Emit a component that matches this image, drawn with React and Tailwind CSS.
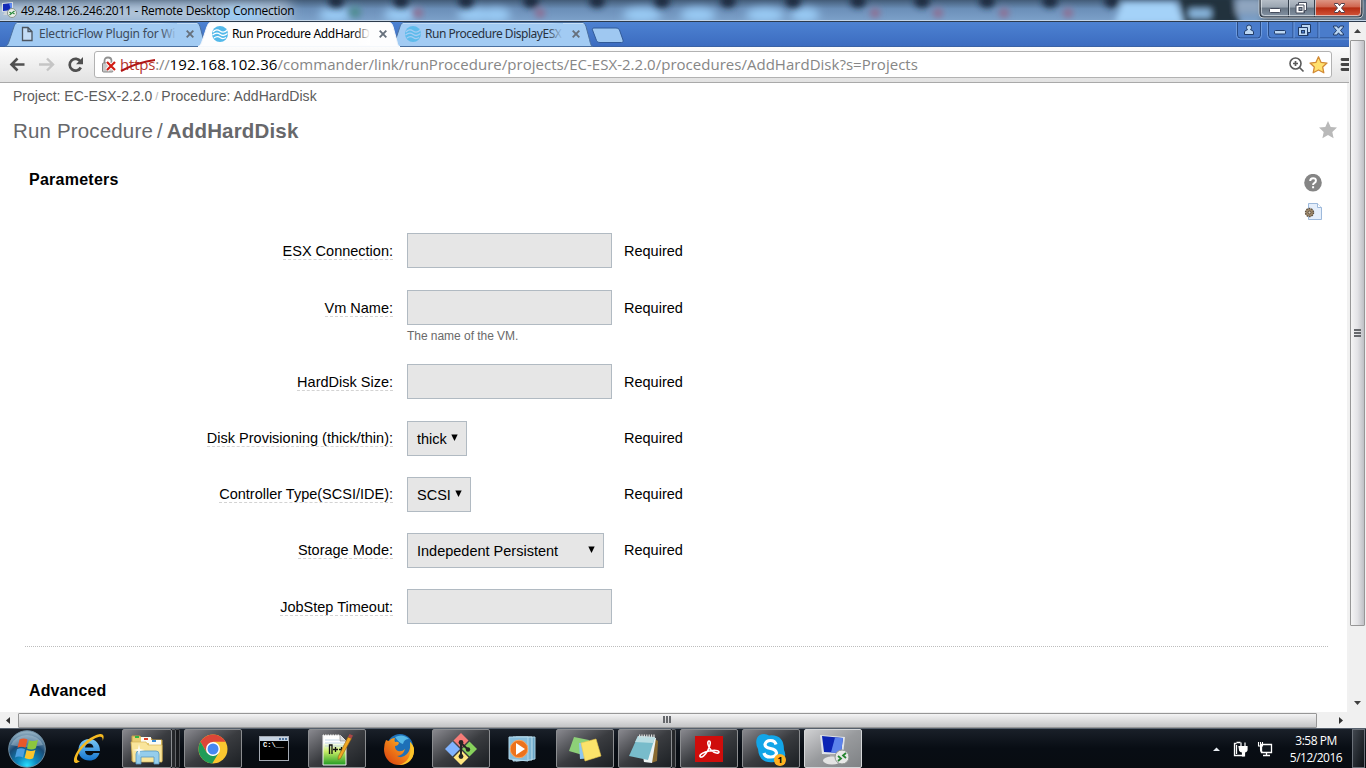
import React from "react";

const darkSpots = [336, 401, 466, 531, 597, 662, 728, 793, 858, 922, 987, 1050, 1112];
const lightSpots = [[335, 20], [400, 20], [475, 22], [496, 18], [642, 24], [698, 22], [765, 24], [805, 18], [240, 30]];
const redSpots = [418, 540, 875, 938, 1004, 1068];

function TitleBackdrop() {
  return (
    <svg className="absolute inset-0" width="1366" height="22" viewBox="0 0 1366 22">
      <defs>
        <linearGradient id="tb" x1="0" y1="0" x2="0" y2="1">
          <stop offset="0" stopColor="#435c78" />
          <stop offset="0.4" stopColor="#6b8fb8" />
          <stop offset="1" stopColor="#7ea3cb" />
        </linearGradient>
        <filter id="b3" x="-50%" y="-100%" width="200%" height="300%"><feGaussianBlur stdDeviation="3.2" /></filter>
        <filter id="b4" x="-50%" y="-100%" width="200%" height="300%"><feGaussianBlur stdDeviation="4" /></filter>
        <filter id="b10" x="-20%" y="-200%" width="140%" height="500%"><feGaussianBlur stdDeviation="7" /></filter>
      </defs>
      <rect width="1366" height="22" fill="url(#tb)" />
      <rect x="-10" y="3" width="300" height="18" fill="#c9d6e2" opacity="0.85" filter="url(#b10)" />
      <g filter="url(#b4)">
        {lightSpots.map(([x, r]) => <ellipse key={x} cx={x} cy="15" rx={r * 0.8} ry="7" fill="#9accf6" />)}
      </g>
      <g filter="url(#b3)">
        {redSpots.map((x) => <circle key={x} cx={x} cy="13" r="5" fill="#8f6e92" />)}
        <circle cx="355" cy="12" r="6" fill="#4f8c92" />
        {darkSpots.map((x) => <ellipse key={x} cx={x} cy="1" rx="8" ry="7" fill="#1c2c3f" />)}
        <path d="M1122 2h54l8 22h-70z" fill="#a4d2f8" />
        <path d="M1178 -6h54l8 32h-56z" fill="#22303d" />
        <rect x="1189" y="9" width="22" height="9" fill="#8ab8e0" />
        <rect x="1236" y="-2" width="26" height="16" fill="#8fa5bf" />
        <rect x="1262" y="0" width="110" height="26" fill="#5f7386" />
      </g>
      <path d="M0 20.5H1366" stroke="#c5d6e8" />
      <path d="M0 21.5H1366" stroke="#2c3a4c" />
    </svg>
  );
}

function XGlyph({ x, y, fill, stroke }) {
  return (
    <path
      transform={`translate(${x} ${y})`}
      d="M0 0h3.4l1.6 2.2L6.6 0H10v1L7 4.5 10 8v1H6.6L5 6.8 3.4 9H0V8l3-3.5L0 1z"
      fill={fill} stroke={stroke} strokeWidth="1"
    />
  );
}

function WindowButtons() {
  return (
    <svg width="108" height="20" viewBox="1258 0 108 20">
      <defs>
        <linearGradient id="wg" x1="0" y1="0" x2="0" y2="1">
          <stop offset="0" stopColor="#b9c1ca" /><stop offset="0.45" stopColor="#9aa5b1" />
          <stop offset="0.5" stopColor="#697684" /><stop offset="1" stopColor="#8594a5" />
        </linearGradient>
        <linearGradient id="wr" x1="0" y1="0" x2="0" y2="1">
          <stop offset="0" stopColor="#dd9583" /><stop offset="0.42" stopColor="#d06650" />
          <stop offset="0.5" stopColor="#b52c12" /><stop offset="1" stopColor="#d4553a" />
        </linearGradient>
      </defs>
      <path d="M1260 -1v14q0 4 4 4h94q4 0 4-4v-14z" fill="url(#wg)" stroke="#e2e8ee" strokeWidth="2.6" />
      <path d="M1260 -1v14q0 4 4 4h94q4 0 4-4v-14z" fill="url(#wg)" stroke="#28303a" strokeWidth="1.2" />
      <path d="M1315 0h46v12q0 4-4 4h-42z" fill="url(#wr)" />
      <path d="M1288.5 0v17M1314.5 0v17" stroke="#35404c" />
      <path d="M1289.5 0v16M1315.5 0v16" stroke="#cdd5dd" opacity=".8" />
      <path d="M1261.5 0v12.5q0 3 3 3h93q3 0 3-3V0" fill="none" stroke="#dfe5ea" opacity=".7" />
      <rect x="1269.5" y="8.500" width="11" height="4" rx="1" fill="#fff" stroke="#454c5c" />
      <path d="M1298.500 2.500h8v8h-2v2.500h-8.500v-8h2.500z" fill="#fff" stroke="#454c5c" />
      <path d="M1296 5h8v8" fill="none" stroke="#454c5c" />
      <rect x="1299" y="7.500" width="3" height="3" fill="#8995a3" stroke="#454c5c" />
      <XGlyph x={1334.5} y={3.5} fill="#fff" stroke="#50404c" />
    </svg>
  );
}

function RdpIcon() {
  return (
    <svg width="16" height="18" viewBox="0 0 16 18" className="shrink-0">
      <path d="M1 3l11-1v9l-11 1z" fill="#d8dde2" />
      <path d="M2 4l9-1v7l-9 1z" fill="#1129b8" />
      <path d="M8 3.300l3-.3v7l-1 .1z" fill="#5f8af0" />
      <path d="M4 12h5l1 3H2z" fill="#cfd4d8" />
      <circle cx="11" cy="13" r="4.500" fill="#e9eee9" stroke="#8b9690" />
      <path d="M8.500 12l2 1.500-2 1.500M13.500 11l-2 1.500 2 1.500" fill="none" stroke="#28883a" strokeWidth="1.200" />
    </svg>
  );
}

function TitleBar() {
  return (
    <header className="relative h-[22px] shrink-0 overflow-hidden">
      <TitleBackdrop />
      <div className="relative flex h-[22px] items-start pl-px">
        <RdpIcon />
        <span className="ml-1 mt-[2px] whitespace-nowrap font-['Open_Sans',sans-serif] text-[12px] leading-[18px] tracking-[-0.26px] text-black">
          49.248.126.246:2011 - Remote Desktop Connection
        </span>
        <div className="ml-auto"><WindowButtons /></div>
      </div>
    </header>
  );
}

function FlowLogo({ faded }) {
  return (
    <svg width="16" height="16" viewBox="0 0 16 16" className="shrink-0" opacity={faded ? 0.85 : 1}>
      <circle cx="8" cy="8" r="8" fill="#53b9ea" />
      <path d="M1 6c2-2.500 5-2.500 7-1s5 1.200 7-.7M.5 9c2.500-2 5.500-2.300 7.500-.7s5 1.300 7.500-.7M2 12c2-1.700 4.500-1.700 6.500-.3s4 .8 5.500-.2" fill="none" stroke={faded ? "#a6cdf4" : "#fff"} strokeWidth="1.300" />
    </svg>
  );
}

function CloseX() {
  return (
    <svg width="8" height="8" viewBox="0 0 8 8" className="shrink-0">
      <path d="M.7.7l6.600 6.600M7.300.7L.7 7.300" stroke="#66707c" strokeWidth="1.900" />
    </svg>
  );
}

function Tab({ active, icon, label, className, textClass, fadeClass }) {
  return (
    <div className={"relative -mb-px h-[25px] w-[202px] shrink-0 " + (active ? "z-10 " : "") + className}>
      <svg className="absolute inset-0" width="202" height="25" viewBox="0 0 202 25">
        <path
          d="M0 24.500C2.500 24 3.500 21 4.500 18l4-12C10 2 10.500.500 13 .5h178c2.500 0 3 1.500 4 4l3.500 13c1 4 1.500 7 3.500 7z"
          fill={active ? "#fdfdfe" : "#a2cbf3"} stroke={active ? "#f4f7fb" : "#496f9f"} strokeWidth="1"
        />
        {!active && <path d="M12 1.500h180" stroke="#c4def7" />}
      </svg>
      <div className="relative flex h-6 items-center pl-[14px]">
        {icon}
        <div className="relative ml-1 w-[138px]">
          <span className={"block whitespace-nowrap font-['Noto_Sans',sans-serif] text-[12px] leading-[22px] " + textClass}>{label}</span>
          <span className={"absolute right-0 top-0 h-full w-4 bg-linear-to-r from-transparent " + fadeClass} />
        </div>
        <span className="ml-[9px]"><CloseX /></span>
      </div>
    </div>
  );
}

function BrowserButtons() {
  return (
    <svg width="114" height="18" viewBox="1235 22 114 18">
      <g fill="#4a7ccb" stroke="#274b86">
        <path d="M1237.500 21v14q0 3 3 3h17q3 0 3-3V21zM1268.500 21v14q0 3 3 3h79V21z" />
      </g>
      <path d="M1236.500 22v13.500q0 3.500 3.500 3.500h18q3.500 0 3.500-3.500V22M1267.500 22v13.500q0 3.500 3.500 3.500h79" fill="none" stroke="#6f9bdd" />
      <path d="M1293 22v16M1318 22v16" stroke="#274b86" />
      <path d="M1294 22v16M1319 22v16" stroke="#6f9bdd" />
      <g fill="#bdd8f3" stroke="#203b67">
        <path d="M1244.500 34.500v-2.500q0-1.500 3-2.300-1-1-1-2.200 0-2.500 2.500-2.500t2.500 2.500q0 1.200-1 2.200 3 .8 3 2.300v2.500z" />
        <rect x="1274.500" y="30.500" width="11" height="3.500" rx="1" />
        <path d="M1301.500 24.500h9v8h-2.500v3h-9.500v-8h3z" />
        <path d="M1298.500 27.500h9v8" fill="none" />
        <rect x="1301.500" y="30.500" width="3" height="2.500" fill="#4a7ccb" />
      </g>
      <XGlyph x={1333.5} y={26} fill="#bdd8f3" stroke="#203b67" />
    </svg>
  );
}

function TabStrip() {
  return (
    <div className="flex h-[25px] shrink-0 items-end border-b border-[#3a62a4] bg-linear-to-b from-[#4d82d2] to-[#3c6cc0]">
      <Tab className="ml-[5px]" textClass="text-[#3c4a5c] tracking-[-0.22px]" fadeClass="to-[#a2cbf3]" label="ElectricFlow Plugin for Wi"
        icon={<svg width="16" height="16" viewBox="0 0 16 16" className="shrink-0"><path d="M3.500 1.500H9l4 4v9H3.500zM9 1.500v4h4" fill="#c4dcf5" stroke="#4c5560" strokeWidth="1.300" /></svg>} />
      <Tab active className="-ml-[9px]" textClass="text-black tracking-[-0.36px]" fadeClass="to-white" label="Run Procedure AddHardD" icon={<FlowLogo />} />
      <Tab className="-ml-[9px]" textClass="text-[#28323e] tracking-[-0.48px]" fadeClass="to-[#a2cbf3]" label="Run Procedure DisplayESX" icon={<FlowLogo faded />} />
      <svg width="34" height="17" viewBox="0 0 34 17" className="-ml-[2px] mb-[2px] shrink-0">
        <path d="M3 1h22c2 0 3 1 3.500 2l3.500 10c.5 1.500 0 2.500-1.500 2.500H9c-2 0-3-1-3.500-2L1.500 3C1 2 1.500 1 3 1z" fill="#9fc8f1" stroke="#315a98" />
      </svg>
      <div className="ml-auto self-start"><BrowserButtons /></div>
    </div>
  );
}

function AddressBar() {
  return (
    <div className="flex h-[36px] shrink-0 items-start overflow-hidden border-b border-[#a9a9a9] bg-linear-to-b from-[#fcfcfc] to-[#e2e2e2] pt-[4px]">
      <svg width="94" height="27" viewBox="0 51 94 27" className="shrink-0">
        <path d="M24.500 64.500H12M17.500 58.500l-6 6 6 6" fill="none" stroke="#505050" strokeWidth="2.600" />
        <path d="M39 64.500h12.500M47 58.500l6 6-6 6" fill="none" stroke="#c5c5c5" strokeWidth="2.400" />
        <path d="M80.500 61.500A5.900 5.900 0 1 0 80.800 67.500" fill="none" stroke="#505050" strokeWidth="2.700" />
        <path d="M83 57v7.200h-7z" fill="#505050" />
      </svg>
      <div className="flex h-[27px] w-[1238px] shrink-0 items-center rounded-[3px] border border-[#b2b2b2] bg-white">
        <svg width="16" height="18" viewBox="0 0 16 18" className="ml-[6px] shrink-0">
          <path d="M3.500 8V5q0-3.500 3.500-3.500T10.500 5v3" fill="none" stroke="#909090" strokeWidth="1.800" />
          <rect x="1.500" y="7" width="10.500" height="9" rx="1" fill="#c9c9c9" stroke="#858585" />
          <path d="M6 6l8 8M14 6l-8 8" stroke="#fff" strokeWidth="4" />
          <path d="M6 6l8 8M14 6l-8 8" stroke="#d11b12" strokeWidth="2.200" />
        </svg>
        <div className="relative -mt-[2px] ml-[3px] flex whitespace-nowrap font-['Open_Sans',sans-serif] text-[15px] leading-[24px] text-[#868686]">
          <span className="tracking-[-0.2px] text-[#b3382f]">https</span>
          <span className="tracking-[-0.2px]">://</span>
          <span className="tracking-[0.13px] text-black">192.168.102.36</span>
          <span className="tracking-[0.02px]">/commander/link/runProcedure/projects/EC-ESX-2.2.0/procedures/AddHardDisk?s=Projects</span>
          <svg className="absolute left-0 top-[5px]" width="36" height="16" viewBox="0 0 36 16"><path d="M1 14Q18 5 35 3" fill="none" stroke="#b01515" strokeWidth="2" /></svg>
        </div>
        <svg width="40" height="20" viewBox="0 0 40 20" className="ml-auto mr-[3px] shrink-0">
          <circle cx="7.500" cy="8.500" r="5.500" fill="none" stroke="#5a5a5a" strokeWidth="1.600" />
          <path d="M5 8.500h5M7.500 6v5M11.500 12.500l4 4" stroke="#5a5a5a" strokeWidth="1.700" />
          <path d="M30.500 1.800l2.600 5.600 5.900.7-4.300 4 1.100 5.700-5.300-2.800-5.300 2.800 1.100-5.700-4.300-4 5.900-.7z" fill="#ffe16e" stroke="#d28a35" strokeWidth="1.300" strokeLinejoin="round" />
        </svg>
      </div>
      <svg width="17" height="27" viewBox="0 0 17 27" className="shrink-0">
        <path d="M10 8.500h10M10 13.500h10M10 18.500h10" stroke="#454545" strokeWidth="2.800" strokeLinecap="round" />
      </svg>
    </div>
  );
}

const rows = [
  { label: "ESX Connection:", required: true, height: "h-[57px]" },
  { label: "Vm Name:", required: true, help: "The name of the VM.", height: "h-[74px]" },
  { label: "HardDisk Size:", required: true, height: "h-[57px]" },
  { label: "Disk Provisioning (thick/thin):", required: true, select: "thick", width: "w-[60px]", height: "h-[56px]" },
  { label: "Controller Type(SCSI/IDE):", required: true, select: "SCSI", width: "w-[64px]", height: "h-[56px]" },
  { label: "Storage Mode:", required: true, select: "Indepedent Persistent", width: "w-[197px]", height: "h-[56px]" },
  { label: "JobStep Timeout:", height: "h-[57px]" },
];

function Field({ row }) {
  if (!row.select) {
    return <input aria-label={row.label} className="block h-[35px] w-[205px] border border-[#b1bac2] bg-[#e6e6e6] outline-none" />;
  }
  return (
    <div className={"flex h-[35px] items-center justify-between border border-[#b1bac2] bg-[#e6e6e6] pl-[9px] pr-[8px] " + row.width}>
      <span className="mt-px whitespace-nowrap">{row.select}</span>
      <svg width="7" height="7" viewBox="0 0 7 7" className="-mt-[2px] shrink-0"><path d="M.3.5h6.400L3.500 7z" fill="#000" /></svg>
    </div>
  );
}

function FormRow({ row }) {
  const offset = row.select ? "mt-[9px] " : "mt-[10px] ";
  return (
    <div className={"grid grid-cols-[393px_205px_1fr] items-start gap-x-[14px] text-[14.5px] leading-[16px] text-black " + row.height}>
      <div className={offset + "flex justify-end"}>
        <span className="h-[17px] whitespace-nowrap border-b border-dashed border-[#d3d3d3]">{row.label}</span>
      </div>
      <div>
        <Field row={row} />
        {row.help && <div className="mt-[4px] text-[12px] leading-[14px] tracking-[-0.04px] text-[#6a6a6a]">{row.help}</div>}
      </div>
      <div className={offset + "-ml-[2px]"}>{row.required ? "Required" : ""}</div>
    </div>
  );
}

function Page() {
  return (
    <main className="flex min-h-0 grow flex-col overflow-hidden border-r-2 border-[#f1f1f1] bg-white">
      <div className="flex h-[27px] shrink-0 items-start pl-[13px] pt-[5px] text-[14px] leading-[16px] text-[#5c5c5c]">
        <span>Project: EC-ESX-2.2.0</span>
        <span className="ml-[3px] mr-[3px] text-[11px] text-[#b5b5b5]">/</span>
        <span className="tracking-[0.06px]">Procedure: AddHardDisk</span>
      </div>
      <div className="flex h-[57px] shrink-0 items-start justify-between pl-[13px] pr-[10px] pt-[9px] text-[20.5px] leading-[24px] text-[#67686b]">
        <h1 className="whitespace-nowrap tracking-[0.16px]">Run Procedure<span className="ml-[4px] mr-[4px]">/</span><b className="text-[#67686b]">AddHardDisk</b></h1>
        <svg width="18" height="18" viewBox="0 0 18 18" className="mt-[2px]"><path d="M9 0l2.700 5.900 6.300.7-4.700 4.300 1.300 6.300L9 14.100l-5.600 3.100 1.300-6.300L0 6.600l6.300-.7z" fill="#b9b9b9" /></svg>
      </div>
      <div className="flex h-[66px] shrink-0 items-start justify-between pl-[29px] pr-[24px]">
        <h2 className="mt-[3px] text-[16px] font-bold leading-[20px] tracking-[0.25px] text-black">Parameters</h2>
        <div className="flex flex-col items-end gap-[11px] pt-[7px]">
          <svg width="18" height="18" viewBox="0 0 18 18" className="mr-px">
            <circle cx="9" cy="8.700" r="8.800" fill="#858585" />
            <path d="M6.200 7q0-2.800 2.900-2.800T11.900 6.700q0 1.300-1.400 2.100Q9.100 9.500 9.100 11M9.100 12.300v2" fill="none" stroke="#fff" strokeWidth="2" />
          </svg>
          <svg width="18" height="18" viewBox="0 1 18 18" className="mr-px">
            <path d="M4.500 1.500h9l4 4v12h-13z" fill="#e4eefb" stroke="#9db9db" />
            <path d="M13.500 1.500v4h4" fill="#fff" stroke="#9db9db" />
            <circle cx="5.500" cy="10.500" r="4" fill="#a08a6c" stroke="#5e503f" strokeWidth="1.400" strokeDasharray="1.600 .9" />
            <circle cx="5.500" cy="10.500" r="1.500" fill="#d8ccba" stroke="#5e503f" />
          </svg>
        </div>
      </div>
      <section className="h-[413px] shrink-0">{rows.map((r) => <FormRow key={r.label} row={r} />)}</section>
      <div className="ml-[25px] mr-[19px] shrink-0 border-t border-dotted border-[#bdbdbd]" />
      <h2 className="mt-[34px] pl-[29px] text-[16px] font-bold leading-[20px] tracking-[0.1px] text-black">Advanced</h2>
    </main>
  );
}

function VerticalScroll() {
  return (
    <div className="flex w-[17px] shrink-0 flex-col items-center bg-[#f0f0f0]">
      <div className="flex h-[18px] items-center"><svg width="7" height="4" viewBox="0 0 7 4"><path d="M0 4L3.500 0 7 4z" fill="#404040" /></svg></div>
      <div className="flex h-[586px] w-[15px] flex-col items-center justify-center gap-px rounded-[1px] border border-[#979797] bg-linear-to-r from-[#f5f5f5] via-[#e3e3e6] to-[#bfc0c5] pr-px">
        <i className="block h-[2px] w-[7px] bg-[#66686c]" />
        <i className="block h-[2px] w-[7px] bg-[#66686c]" />
        <i className="block h-[2px] w-[7px] bg-[#66686c]" />
      </div>
      <div className="mt-auto flex h-[19px] items-center"><svg width="7" height="4" viewBox="0 0 7 4"><path d="M0 0h7L3.500 4z" fill="#404040" /></svg></div>
    </div>
  );
}

function HorizontalScroll() {
  return (
    <div className="flex h-[16px] shrink-0 items-center bg-[#f0f0f0]">
      <div className="flex w-[18px] justify-center pr-[2px]"><svg width="4" height="7" viewBox="0 0 4 7"><path d="M4 0v7L0 3.500z" fill="#303030" /></svg></div>
      <div className="flex h-[15px] w-[1299px] items-center justify-center gap-px rounded-[1px] border border-[#979797] bg-linear-to-b from-[#f4f4f4] via-[#dcdcdd] to-[#c3c4c6] pb-[2px] pr-[2px]">
        <i className="block h-[7px] w-[2px] bg-[#66686c]" />
        <i className="block h-[7px] w-[2px] bg-[#66686c]" />
        <i className="block h-[7px] w-[2px] bg-[#66686c]" />
      </div>
      <div className="ml-[22px]"><svg width="4" height="7" viewBox="0 0 4 7"><path d="M0 0v7l4-3.500z" fill="#303030" /></svg></div>
    </div>
  );
}

function TaskButton({ children, className, active, stacked }) {
  return (
    <div className={"flex h-[39px] shrink-0 " + className}>
      <div className={"flex grow items-center justify-center rounded-[2px] border " + (active
        ? "border-[#d5d7d9] bg-linear-to-br from-[#d0d1d3] via-[#989a9d] to-[#7f8285]"
        : "border-[#8b8d90] bg-linear-to-br from-[#89898f] via-[#3a3c40] to-[#1c2024]")}>
        {children}
      </div>
      {stacked && <div className="w-[4px] shrink-0 rounded-r-[2px] border-y border-r border-[#65676a] bg-[#26282b]" />}
      {stacked === 2 && <div className="w-[4px] shrink-0 rounded-r-[2px] border-y border-r border-[#4b4d50] bg-[#17191c]" />}
    </div>
  );
}

function StartOrb() {
  return (
    <svg width="40" height="40" viewBox="0 0 40 40" className="ml-[7px] shrink-0">
      <defs>
        <radialGradient id="orb" cx=".5" cy=".95" r=".9">
          <stop offset="0" stopColor="#28e0ff" /><stop offset=".3" stopColor="#0f87bd" />
          <stop offset=".65" stopColor="#194a75" /><stop offset="1" stopColor="#8fadc0" />
        </radialGradient>
      </defs>
      <circle cx="20" cy="20" r="18.300" fill="url(#orb)" stroke="#6f8ea3" />
      <path d="M4 16a17 15 0 0 1 32 0Q20 20 4 16z" fill="#d2e2ec" opacity=".35" />
      <path d="M12.500 10.500q4-2 8 0l-2 8.300q-4-2-8 0z" fill="#e9582a" />
      <path d="M22 11.200q4.500 2 9-.4l-2.200 8.400q-4 2.300-8.800.2z" fill="#8cc63e" />
      <path d="M10 20.300q4-2 8 0l-2 8.200q-4-2-8 0z" fill="#4c9fe0" />
      <path d="M19.600 21q4.400 2 8.800 0l-2.200 8.300q-4 2-8.600-.2z" fill="#fcc52c" />
    </svg>
  );
}

function IEIcon() {
  return (
    <svg width="34" height="34" viewBox="0 0 34 34" className="shrink-0">
      <defs><linearGradient id="ie" x1="0" y1="0" x2="0" y2="1"><stop offset="0" stopColor="#7cc9f5" /><stop offset="1" stopColor="#1474cf" /></linearGradient></defs>
      <path fillRule="evenodd" d="M17 7c6.500 0 11 4.500 11 12H13c.3 3 2 4.300 4.500 4.300 2 0 3.200-.8 4-2.300h6c-1.400 5-5.200 7.500-10 7.500C10.500 28.500 6.500 24 6.500 18S10.500 7 17 7zm-4 8.500h8.500c-.4-2.700-1.900-4-4.200-4s-3.900 1.400-4.300 4z" fill="url(#ie)" />
      <path d="M8 29C2 34 0 29 4 21.500 9 12 20 3 28 2c4-.3 4.500 3 2.500 7 .6-3-.5-5-4-4C19 7 9 16 6 23c-2 4-1 6.500 2 6z" fill="#f5b921" />
    </svg>
  );
}

function ExplorerIcon() {
  return (
    <svg width="34" height="34" viewBox="0 0 34 34">
      <path d="M2 4h8l2 2h9l1 2h10v21H2z" fill="#e9cd72" stroke="#c4a147" />
      <path d="M11 5h10v6H11zM19 8h12v5H19z" fill="#fbfbf2" />
      <rect x="5" y="4" width="4" height="2" fill="#33b544" /><rect x="14" y="6" width="4" height="2" fill="#dd3f28" /><rect x="22" y="8" width="4" height="2" fill="#3a8dd8" />
      <path d="M1 10h15l2 3h14v17H3z" fill="#f9e59b" stroke="#d5b659" strokeWidth=".7" />
      <path d="M6 32V22q0-3 3-3h17q3 0 3 3v10h-5v-7H11v7z" fill="#95cdec" stroke="#5898c0" strokeWidth=".8" />
      <path d="M9 12l1 5 5 1-5 1-1 5-1-5-5-1 5-1z" fill="#fff" opacity=".85" />
    </svg>
  );
}

function ChromeIcon() {
  return (
    <svg width="30" height="30" viewBox="0 0 30 30">
      <circle cx="15" cy="15" r="14.500" fill="#fbc72f" />
      <path d="M2.500 7.700A14.500 14.500 0 0 1 27.600 7.800H15L8.700 18.600z" fill="#de4637" />
      <path d="M2.500 7.700L8.800 18.700 15 22l-1 7.500A14.500 14.500 0 0 1 2.500 7.700z" fill="#209c58" />
      <path d="M8.700 18.600L15 22l5.500-2.700-6.300 10.200z" fill="#209c58" />
      <circle cx="15" cy="15" r="7" fill="#fff" /><circle cx="15" cy="15" r="5.500" fill="#4688f1" />
    </svg>
  );
}

function CmdIcon() {
  return (
    <div className="flex h-[25px] w-[30px] shrink-0 flex-col border border-[#a4aab3] bg-black">
      <div className="flex h-[4px] shrink-0 items-center justify-end gap-px bg-[#c6d3e2] pr-px"><i className="size-[2px] bg-[#51749d]" /><i className="size-[2px] bg-[#51749d]" /><i className="size-[2px] bg-[#51749d]" /></div>
      <span className="whitespace-nowrap pl-[3px] font-['Liberation_Mono',monospace] text-[7px] font-bold leading-[9px] text-white">C:\__</span>
    </div>
  );
}

function NotepadPlusIcon() {
  return (
    <svg width="34" height="36" viewBox="0 0 34 36">
      <defs><linearGradient id="npp" x1="0" y1="0" x2="0" y2="1"><stop offset="0.25" stopColor="#fff" /><stop offset=".55" stopColor="#c7ed66" /><stop offset="1" stopColor="#1f9a22" /></linearGradient></defs>
      <path d="M3 4h17l6 6v24H3z" fill="url(#npp)" stroke="#f0f0f0" />
      <path d="M20 4v6h6" fill="#d8d8d8" stroke="#888" strokeWidth=".7" />
      <path d="M5 9h14M5 12h19M5 15h19" stroke="#b4cbe0" strokeWidth=".8" />
      <path d="M4 3.500h16" stroke="#666" strokeWidth="1.500" strokeDasharray="1 1.500" />
      <path d="M9.500 23v-9h2.500v9M13 18.500h5M15.500 16v5M19 18.500h5M21.500 16v5" fill="none" stroke="#111" strokeWidth="1.300" />
      <path d="M28 6l3.500 1.500-11 20-2.500 1 .3-3z" fill="#f0a824" stroke="#8a5b16" strokeWidth=".6" /><path d="M28 6l1.500-3 3.500 1.500-1.500 3z" fill="#a94747" />
    </svg>
  );
}

function FirefoxIcon() {
  return (
    <svg width="32" height="32" viewBox="0 0 32 32" className="shrink-0">
      <defs><linearGradient id="ff" x1="0" y1="1" x2="1" y2="0"><stop offset="0" stopColor="#d7390e" /><stop offset=".5" stopColor="#f08019" /><stop offset="1" stopColor="#fdd733" /></linearGradient></defs>
      <circle cx="17" cy="14" r="13" fill="#1e70b7" />
      <path d="M12 4q8-4 14 2-5 0-6 5-4-1-8-7z" fill="#56b8e6" />
      <path d="M3 7q2 1 3 1 2-3 6-3-1 2 0 4 3-1 4 1-1 3-4 3 0 4 3 5 4 1 7-2-2 7-8 7 5 3 10-2 4-4 3-12 4 4 4 8c0 9-6 15-15 15S1 25 1 16Q1 11 3 7z" fill="url(#ff)" />
      <path d="M27 9q4 4 4 8c0 9-6 15-15 15 9-3 13-9 11-23z" fill="#fbc42a" />
    </svg>
  );
}

function GitIcon() {
  return (
    <svg width="34" height="34" viewBox="0 0 34 34">
      <path d="M17 1l7.500 7.500L17 16 9.500 8.500z" fill="#f67c78" /><path d="M8.500 9.500L16 17l-7.500 7.500L1 17z" fill="#80b3ff" />
      <path d="M25.500 9.500L33 17l-7.500 7.500L18 17z" fill="#87d15c" /><path d="M17 18l7.500 7.500L17 33l-7.500-7.500z" fill="#ffe680" />
      <path d="M17 11v14M17 11l7 6.500" stroke="#252525" strokeWidth="2" />
      <circle cx="17" cy="10.500" r="2.400" fill="#252525" /><circle cx="24" cy="17.500" r="2.200" fill="#252525" /><circle cx="17" cy="24.500" r="2.400" fill="#252525" />
    </svg>
  );
}

function MediaIcon() {
  return (
    <svg width="29" height="28" viewBox="0 0 29 28" className="shrink-0">
      <path d="M8 2h19v22l-19 2z" fill="#6aa6c7" stroke="#a9d0e3" /><path d="M5 2h19v23l-19 1z" fill="#7db5d3" stroke="#c0e0ee" />
      <path d="M1 2h19v24l-19-2z" fill="#87bddb" stroke="#b3d9ec" />
      <circle cx="11" cy="14" r="8.800" fill="#ed721c" stroke="#f8a661" /><path d="M8 8l9 6-9 6z" fill="#fff" />
    </svg>
  );
}

function StickyIcon() {
  return (
    <svg width="34" height="30" viewBox="0 0 34 30">
      <path d="M6 3l15 3-3 16L1 17z" fill="#8dd078" /><path d="M11 9l15-1 1 16-15 1z" fill="#8cc6f0" />
      <path d="M13 9l15-4 5 17-16 5z" fill="#fbe36b" stroke="#ecc94c" strokeWidth=".6" />
    </svg>
  );
}

function NotebookIcon() {
  return (
    <svg width="34" height="32" viewBox="0 0 34 32">
      <path d="M24 4l6 4-1 20-6 2z" fill="#8a6a30" /><path d="M11 3l17 2-4 25-8-1z" fill="#ecf2f2" />
      <path d="M10 3l17 1-7 23-19-4z" fill="#78bccb" /><path d="M10 3l17 1-2 6L7 9z" fill="#b9dde3" />
      <path d="M11 3h16" stroke="#ddd" strokeWidth="3" strokeDasharray="1.200 1.200" />
    </svg>
  );
}

function AcrobatIcon() {
  return (
    <svg width="28" height="26" viewBox="0 0 28 26">
      <rect width="28" height="26" fill="#cf0d0b" />
      <path d="M5 20.500c-1-2 4-4.500 9-5.500s10-.8 10 1-4.500 1.500-8-2-4-9-2-9 1.500 4-1 9-6.500 8.500-8 6.500z" fill="none" stroke="#fff" strokeWidth="1.600" />
    </svg>
  );
}

function SkypeIcon() {
  return (
    <div className="relative">
      <svg width="30" height="32" viewBox="0 0 30 32">
        <path d="M8 1q3 0 5 1.500Q28 1 28 17q3 6-1 10-3 4-9 2Q3 31 2 16-1 10 1 5q2-4 7-4z" fill="#12a5e8" />
        <path d="M20 11.500q-1-4-5.500-4T9 11.500q0 3 5.500 4t6 4.500q-.5 4-6 4t-6.500-4" fill="none" stroke="#fff" strokeWidth="3.200" />
      </svg>
      <span className="absolute -bottom-px right-0 flex size-[12px] items-center justify-center rounded-full bg-[#ffb01f] font-['Open_Sans',sans-serif] text-[9px] font-bold leading-none text-black">1</span>
    </div>
  );
}

function RemoteIcon() {
  return (
    <svg width="34" height="34" viewBox="0 0 34 34">
      <path d="M4 3l25 2-2 18-21-1z" fill="#dfe3e8" /><path d="M6 4l21 2-2 15-17-1z" fill="#0c24b4" /><path d="M19 5.500l8 .5-2 15-10-.5z" fill="#5c83ec" />
      <path d="M14 22h6v4h-6z" fill="#aaa" /><ellipse cx="16" cy="28.500" rx="9" ry="4" fill="#e3e3e3" />
      <circle cx="26" cy="25" r="7" fill="#e8e8e8" stroke="#8e9490" /><path d="M22 24l3 2.500-3 2.500M30 21l-3 2.500 3 2.500" fill="none" stroke="#25852f" strokeWidth="1.800" />
    </svg>
  );
}

function Taskbar() {
  return (
    <footer className="flex h-[40px] shrink-0 items-center overflow-hidden border-t border-[#56606d] bg-linear-to-b from-[#1a2029] via-[#080d14] to-[#080c11]">
      <StartOrb />
      <span className="ml-[25px]"><IEIcon /></span>
      <TaskButton className="ml-[16px] w-[58px]" stacked={2}><ExplorerIcon /></TaskButton>
      <TaskButton className="ml-[4px] w-[58px]"><ChromeIcon /></TaskButton>
      <span className="ml-[17px]"><CmdIcon /></span>
      <TaskButton className="ml-[19px] w-[58px]"><NotepadPlusIcon /></TaskButton>
      <span className="ml-[17px]"><FirefoxIcon /></span>
      <TaskButton className="ml-[17px] w-[58px]"><GitIcon /></TaskButton>
      <span className="ml-[18px]"><MediaIcon /></span>
      <TaskButton className="ml-[19px] w-[58px]"><StickyIcon /></TaskButton>
      <TaskButton className="ml-[4px] w-[58px]" stacked={1}><NotebookIcon /></TaskButton>
      <TaskButton className="ml-[4px] w-[58px]"><AcrobatIcon /></TaskButton>
      <TaskButton className="ml-[4px] w-[58px]"><SkypeIcon /></TaskButton>
      <TaskButton className="ml-[4px] w-[58px]" active><RemoteIcon /></TaskButton>
      <svg width="62" height="20" viewBox="1212 739 62 20" className="ml-auto shrink-0">
        <path d="M1213 751l3.500-3.500 3.500 3.500z" fill="#e8edf2" />
        <path d="M1236.500 743.500h-2v12h9v-3M1236.500 742.500h4M1236.500 745v9" fill="none" stroke="#fff" strokeWidth="1.300" />
        <path d="M1239 746.500h8v3q0 2-2.500 2.500v4h-2v-4q-3-.5-3-2.500zM1241 742.500v4M1245 742.500v4" fill="#fff" stroke="#fff" strokeWidth="1.200" />
        <path d="M1261.500 744.500h10v8h-10zM1263 755.500h7M1266.500 753v3" fill="#10161d" stroke="#fff" strokeWidth="1.300" />
        <path d="M1258.500 742v4h4v-4M1260.500 742v8q0 2 2 2" fill="none" stroke="#fff" strokeWidth="1.100" />
      </svg>
      <div className="ml-[14px] w-[56px] text-center font-['Open_Sans',sans-serif] text-[12px] leading-[17px] tracking-[-0.5px] text-white">
        <div>3:58 PM</div>
        <div>5/12/2016</div>
      </div>
      <div className="ml-[8px] mr-px h-[39px] w-[13px] border border-[#6a7078] bg-linear-to-br from-[#41474f] to-[#0e1216]" />
    </footer>
  );
}

export default function App() {
  return (
    <div className="flex h-[768px] w-[1366px] flex-col overflow-hidden bg-white font-['Liberation_Sans',Arial,sans-serif]">
      <TitleBar />
      <div className="flex h-[690px] shrink-0">
        <div className="flex w-[1349px] min-w-0 flex-col">
          <TabStrip />
          <AddressBar />
          <Page />
        </div>
        <VerticalScroll />
      </div>
      <HorizontalScroll />
      <Taskbar />
    </div>
  );
}
